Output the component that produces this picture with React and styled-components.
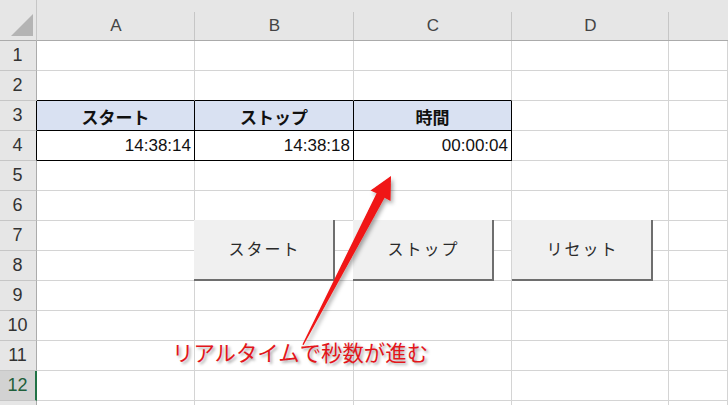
import React from "react";
import styled, { createGlobalStyle } from "styled-components";

const GlobalStyle = createGlobalStyle`
  html, body { margin: 0; padding: 0; background: #ffffff; overflow: hidden; }
  * { box-sizing: border-box; }
`;

const Sheet = styled.div`
  position: relative;
  width: 728px;
  height: 405px;
  overflow: hidden;
  background: #ffffff;
  font-family: "Liberation Sans", "Noto Sans CJK JP", sans-serif;
`;

const Grid = styled.div`
  display: grid;
  grid-template-columns: 37px 158px 159px 158px 157px 1fr;
  grid-template-rows: 41px repeat(12, 30px) 30px;
`;

const Corner = styled.div`
  position: relative;
  background: #e6e6e6;
  border-right: 1px solid #c6c6c6;
  border-bottom: 1px solid #ababab;
`;

const CornerTriangle = styled.svg`
  position: absolute;
  left: 11px;
  top: 14px;
`;

const ColHeader = styled.div`
  position: relative;
  background: #e6e6e6;
  border-bottom: 1px solid #ababab;
  display: flex;
  align-items: center;
  justify-content: center;
  padding-top: 11px;
  font-size: 17px;
  color: #444444;
  &::after {
    content: "";
    position: absolute;
    right: 0;
    top: 12px;
    bottom: 0;
    width: 1px;
    background: ${(p) => (p.$last ? "transparent" : "#c6c6c6")};
  }
`;

const RowHeader = styled.div`
  background: ${(p) => (p.$selected ? "#d2d2d2" : "#e6e6e6")};
  border-right: ${(p) =>
    p.$selected ? "2px solid #217346" : `1px solid ${p.$dark ? "#000000" : "#ababab"}`};
  border-bottom: 1px solid #c6c6c6;
  display: flex;
  align-items: center;
  justify-content: center;
  padding-right: ${(p) => (p.$selected ? "0px" : "1px")};
  font-size: 18px;
  color: ${(p) => (p.$selected ? "#1f5f3b" : "#333333")};
`;

const Cell = styled.div`
  background: ${(p) => (p.$head ? "#d9e1f2" : "#ffffff")};
  border-right: 1px solid ${(p) => (p.$rb ? "#000000" : "#d4d4d4")};
  border-bottom: 1px solid ${(p) => (p.$bb ? "#000000" : "#d4d4d4")};
  display: flex;
  align-items: center;
  justify-content: ${(p) => (p.$align === "right" ? "flex-end" : "center")};
  padding-right: ${(p) => (p.$align === "right" ? "3px" : "0")};
  padding-top: 1px;
  font-size: 17px;
  font-weight: ${(p) => (p.$head ? 700 : 400)};
  color: #111111;
  white-space: nowrap;
`;

/* Form-control buttons float above the worksheet grid */
const ButtonLayer = styled.div`
  position: absolute;
  left: 194px;
  top: 220px;
  display: flex;
  gap: 18px;
`;

const MacroButton = styled.div`
  width: 141px;
  height: 61px;
  background: #f0f0f0;
  border-right: 2px solid #6e6e6e;
  border-bottom: 2px solid #6e6e6e;
  display: flex;
  align-items: center;
  justify-content: center;
  padding-left: 2px;
  padding-bottom: 3px;
  font-family: "Noto Sans CJK JP", sans-serif;
  font-weight: 400;
  font-size: 16px;
  letter-spacing: 2px;
  color: #2a2a2a;
`;

const Annotation = styled.div`
  position: absolute;
  left: 172px;
  top: 339px;
  font-family: "Noto Sans CJK JP", sans-serif;
  font-size: 21.4px;
  line-height: 1.2;
  color: #e3161b;
  white-space: nowrap;
  text-shadow: 2px 2px 3px rgba(0, 0, 0, 0.35);
`;

const ArrowLayer = styled.svg`
  position: absolute;
  left: 0;
  top: 0;
  pointer-events: none;
`;

const cols = ["A", "B", "C", "D", ""];

const tableData = {
  3: ["スタート", "ストップ", "時間"],
  4: ["14:38:14", "14:38:18", "00:00:04"],
};

const buttons = ["スタート", "ストップ", "リセット"];

export default function App() {
  const rows = [];
  for (let r = 1; r <= 13; r++) {
    const label = r <= 12 ? String(r) : "";
    rows.push(
      <RowHeader key={`rh${r}`} $selected={r === 12} $dark={r === 3 || r === 4}>
        {label}
      </RowHeader>
    );
    for (let c = 0; c < 5; c++) {
      const inTable = c < 3 && (r === 3 || r === 4);
      const content = inTable ? tableData[r][c] : "";
      rows.push(
        <Cell
          key={`c${r}-${c}`}
          $head={r === 3 && c < 3}
          $align={r === 4 ? "right" : "center"}
          $rb={inTable}
          $bb={c < 3 && (r === 2 || r === 3 || r === 4)}
        >
          {content}
        </Cell>
      );
    }
  }

  return (
    <>
      <GlobalStyle />
      <Sheet>
        <Grid>
          <Corner>
            <CornerTriangle width="23" height="23" viewBox="0 0 23 23">
              <polygon points="22,0 22,22 0,22" fill="#b4b4b4" />
            </CornerTriangle>
          </Corner>
          {cols.map((c, i) => (
            <ColHeader key={`h${i}`} $last={i === 4}>
              {c}
            </ColHeader>
          ))}
          {rows}
        </Grid>

        <ButtonLayer>
          {buttons.map((b) => (
            <MacroButton key={b}>{b}</MacroButton>
          ))}
        </ButtonLayer>

        <ArrowLayer width="728" height="405" viewBox="0 0 728 405">
          <defs>
            <filter id="shadow" x="-20%" y="-20%" width="140%" height="140%">
              <feDropShadow dx="2" dy="3" stdDeviation="2" floodColor="#000" floodOpacity="0.35" />
            </filter>
          </defs>
          <polygon
            filter="url(#shadow)"
            fill="#f01414"
            points="391,176 390.5,201 384.6,197.8 303.6,345 302.4,344.4 376.6,193.2 370.5,190.4"
          />
        </ArrowLayer>

        <Annotation>リアルタイムで秒数が進む</Annotation>
      </Sheet>
    </>
  );
}
